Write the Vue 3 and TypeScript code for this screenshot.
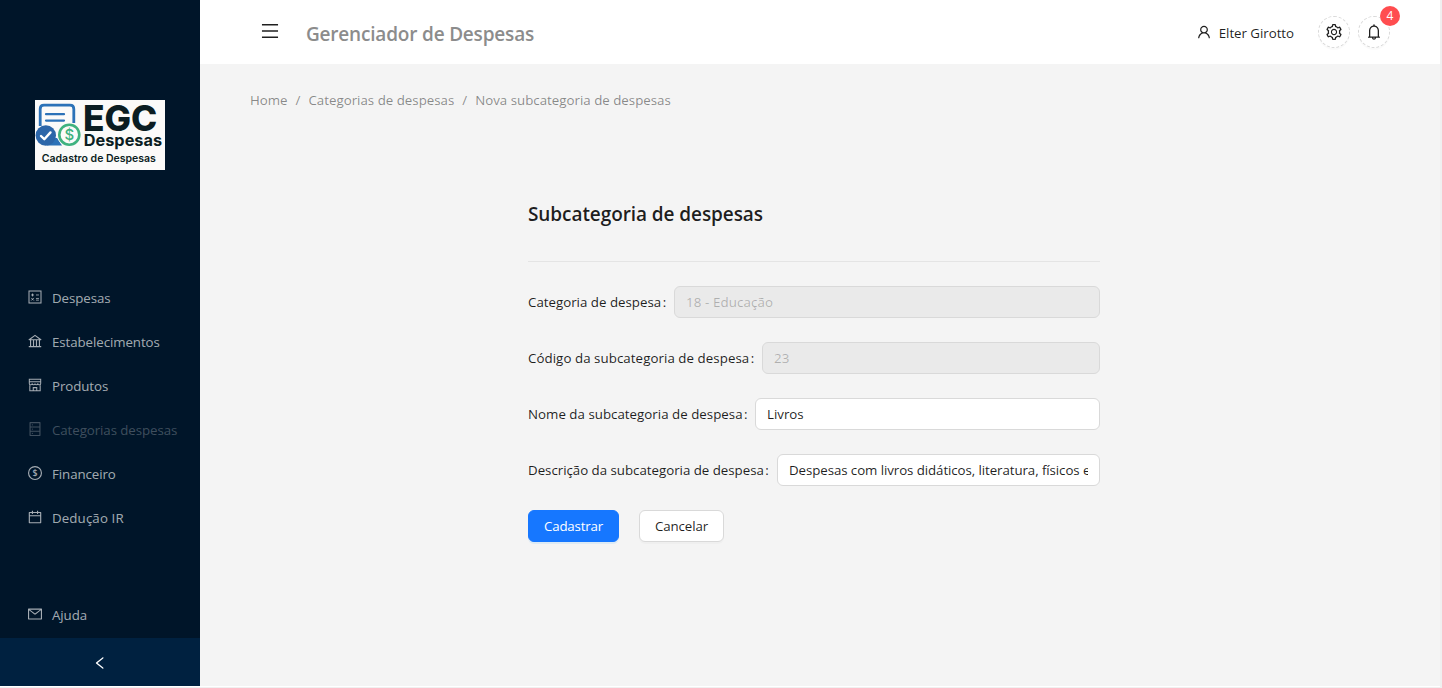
<script setup lang="ts">
import { ref } from 'vue'

interface MenuItem {
  label: string
  icon: string
  disabled?: boolean
}

const icons: Record<string, string> = {
  bank: 'M894 462c30.9 0 43.8-39.7 18.7-58L530.8 126.2a31.81 31.81 0 00-37.6 0L111.3 404c-25.1 18.2-12.2 58 18.8 58H192v374h-72c-4.4 0-8 3.6-8 8v52c0 4.4 3.6 8 8 8h784c4.4 0 8-3.6 8-8v-52c0-4.4-3.6-8-8-8h-72V462h62zM512 196.7l271.1 197.2H240.9L512 196.7zM264 462h117v374H264V462zm189 0h117v374H453V462zm307 374H642V462h118v374z',
  database: 'M832 64H192c-17.7 0-32 14.3-32 32v832c0 17.7 14.3 32 32 32h640c17.7 0 32-14.3 32-32V96c0-17.7-14.3-32-32-32zm-600 72h560v208H232V136zm560 480H232V408h560v208zm0 272H232V680h560v208zM304 240a40 40 0 1080 0 40 40 0 10-80 0zm0 272a40 40 0 1080 0 40 40 0 10-80 0zm0 272a40 40 0 1080 0 40 40 0 10-80 0z',
  calendar: 'M880 184H712v-64c0-4.4-3.6-8-8-8h-56c-4.4 0-8 3.6-8 8v64H384v-64c0-4.4-3.6-8-8-8h-56c-4.4 0-8 3.6-8 8v64H144c-17.7 0-32 14.3-32 32v664c0 17.7 14.3 32 32 32h736c17.7 0 32-14.3 32-32V216c0-17.7-14.3-32-32-32zm-40 656H184V460h656v380zM184 392V256h128v48c0 4.4 3.6 8 8 8h56c4.4 0 8-3.6 8-8v-48h256v48c0 4.4 3.6 8 8 8h56c4.4 0 8-3.6 8-8v-48h128v136H184z',
  mail: 'M928 160H96c-17.7 0-32 14.3-32 32v640c0 17.7 14.3 32 32 32h832c17.7 0 32-14.3 32-32V192c0-17.7-14.3-32-32-32zm-40 110.8V792H136V270.8l-27.6-21.5 39.3-50.5 42.8 33.3h643.1l42.8-33.3 39.3 50.5-27.7 21.5zM833.6 232L512 482 190.4 232l-42.8-33.3-39.3 50.5 27.6 21.5 341.6 265.6a55.99 55.99 0 0068.7 0L888 270.8l27.6-21.5-39.3-50.5-42.7 33.2z',
}

const menu: MenuItem[] = [
  { label: 'Despesas', icon: 'calc' },
  { label: 'Estabelecimentos', icon: 'bank' },
  { label: 'Produtos', icon: 'shop' },
  { label: 'Categorias despesas', icon: 'database', disabled: true },
  { label: 'Financeiro', icon: 'dollar' },
  { label: 'Dedução IR', icon: 'calendar' },
]

const crumbs = ['Home', 'Categorias de despesas', 'Nova subcategoria de despesas']

const categoria = ref('18 - Educação')
const codigo = ref('23')
const nome = ref('Livros')
const descricao = ref('Despesas com livros didáticos, literatura, físicos e digitais')
</script>

<template>
  <div class="layout">
    <aside class="sider">
      <svg class="logo" viewBox="0 0 130 70" width="130" height="70">
        <rect width="130" height="70" fill="#fbfaf9" />
        <path d="M5.2 26V9Q5.2 5.2 9 5.2H35Q38.8 5.2 38.8 9V23" fill="none" stroke="#2c72b8" stroke-width="2.8" />
        <path d="M11 14.2H29M11 20.6H29" stroke="#2c72b8" stroke-width="2.2" stroke-linecap="round" />
        <path d="M12 45.6H27L22 38H12z" fill="#2c72b8" />
        <circle cx="10.8" cy="35.5" r="10.2" fill="#2c66a9" />
        <path d="M6 36L9.3 39.2L15.5 32.4" fill="none" stroke="#fff" stroke-width="2.4" stroke-linecap="round" stroke-linejoin="round" />
        <circle cx="34.3" cy="34.7" r="12" fill="#fbfaf9" />
        <circle cx="34.3" cy="34.7" r="10" fill="#fbfaf9" stroke="#3fb27f" stroke-width="2.6" />
        <text class="logo-coin" x="34.3" y="40" text-anchor="middle">$</text>
        <text class="logo-egc" x="48" y="30.8">EGC</text>
        <text class="logo-name" x="48.8" y="46.2">Despesas</text>
        <text class="logo-sub" x="6.8" y="62.2">Cadastro de Despesas</text>
      </svg>

      <nav class="menu">
        <a v-for="item in menu" :key="item.label" class="item" :class="{ disabled: item.disabled }">
          <svg class="icon" viewBox="64 64 896 896" width="14" height="14">
            <g v-if="item.icon === 'calc'" fill="none" stroke="currentColor">
              <rect x="128" y="128" width="768" height="768" stroke-width="66" />
              <path d="M260 382H450M355 287V477M574 382H764M574 604H764M574 712H764M272 572L438 738M438 572L272 738" stroke-width="54" />
            </g>
            <g v-else-if="item.icon === 'shop'" fill="none" stroke="currentColor" stroke-width="66">
              <path d="M148 148H876V410Q876 500 800 500Q700 500 696 410Q690 500 604 500Q516 500 512 410Q508 500 420 500Q334 500 328 410Q324 500 224 500Q148 500 148 410ZM148 300H876M180 500V876H844V500M400 876V680H624V876" />
            </g>
            <g v-else-if="item.icon === 'dollar'">
              <circle cx="512" cy="512" r="412" fill="none" stroke="currentColor" stroke-width="72" />
              <text x="512" y="712" text-anchor="middle" class="coin">$</text>
            </g>
            <path v-else :d="icons[item.icon]" fill="currentColor" />
          </svg>
          <span>{{ item.label }}</span>
        </a>
      </nav>

      <a class="item help">
        <svg class="icon" viewBox="64 64 896 896" width="14" height="14"><path :d="icons.mail" fill="currentColor" /></svg>
        <span>Ajuda</span>
      </a>
      <button class="trigger" type="button" aria-label="Recolher menu">
        <svg viewBox="64 64 896 896" width="14" height="14" fill="currentColor">
          <path d="M724 218.3V141c0-6.7-7.7-10.4-12.9-6.3L260.3 486.8a31.86 31.86 0 000 50.3l450.8 352.1c5.3 4.1 12.9.4 12.9-6.3v-77.3c0-4.9-2.3-9.6-6.1-12.6l-360-281 360-281.1c3.8-3 6.1-7.7 6.1-12.6z" />
        </svg>
      </button>
    </aside>

    <div class="main">
      <header class="header">
        <svg class="burger" viewBox="64 64 896 896" width="18" height="18" fill="currentColor">
          <path d="M904 160H120c-4.4 0-8 3.6-8 8v64c0 4.4 3.6 8 8 8h784c4.4 0 8-3.6 8-8v-64c0-4.4-3.6-8-8-8zm0 624H120c-4.4 0-8 3.6-8 8v64c0 4.4 3.6 8 8 8h784c4.4 0 8-3.6 8-8v-64c0-4.4-3.6-8-8-8zm0-312H120c-4.4 0-8 3.6-8 8v64c0 4.4 3.6 8 8 8h784c4.4 0 8-3.6 8-8v-64c0-4.4-3.6-8-8-8z" />
        </svg>
        <h1 class="brand">Gerenciador de Despesas</h1>
        <div class="user">
          <svg viewBox="64 64 896 896" width="14" height="14" fill="currentColor">
            <path d="M858.5 763.6a374 374 0 00-80.6-119.5 375.63 375.63 0 00-119.5-80.6c-.4-.2-.8-.3-1.2-.5C719.5 518 760 444.7 760 362c0-137-111-248-248-248S264 225 264 362c0 82.7 40.5 156 102.8 201.1-.4.2-.8.3-1.2.5-44.8 18.9-85 46-119.5 80.6a375.63 375.63 0 00-80.6 119.5A371.7 371.7 0 00136 901.8a8 8 0 008 8.2h60c4.4 0 7.9-3.5 8-7.8 2-77.2 33-149.5 87.8-204.3 56.7-56.7 132-87.9 212.2-87.9s155.5 31.2 212.2 87.9C779 752.7 810 825 812 902.2c.1 4.4 3.6 7.8 8 7.8h60a8 8 0 008-8.2c-1-47.8-10.9-94.3-29.5-138.2zM512 534c-45.9 0-89.1-17.9-121.6-50.4S340 407.9 340 362c0-45.9 17.9-89.1 50.4-121.6S466.1 190 512 190s89.1 17.9 121.6 50.4S684 316.1 684 362c0 45.9-17.9 89.1-50.4 121.6S557.9 534 512 534z" />
          </svg>
          <span>Elter Girotto</span>
        </div>
        <button class="round" type="button" aria-label="Configurações">
          <svg viewBox="64 64 896 896" width="16" height="16" fill="currentColor">
            <path d="M924.8 625.7l-65.5-56c3.1-19 4.7-38.4 4.7-57.8s-1.6-38.8-4.7-57.8l65.5-56a32.03 32.03 0 009.3-35.2l-.9-2.6a443.74 443.74 0 00-79.7-137.9l-1.8-2.1a32.12 32.12 0 00-35.1-9.5l-81.3 28.9c-30-24.6-63.5-44-99.7-57.6l-15.7-85a32.05 32.05 0 00-25.8-25.7l-2.7-.5c-52.1-9.4-106.9-9.4-159 0l-2.7.5a32.05 32.05 0 00-25.8 25.7l-15.8 85.4a351.86 351.86 0 00-99 57.4l-81.9-29.1a32 32 0 00-35.1 9.5l-1.8 2.1a446.02 446.02 0 00-79.7 137.9l-.9 2.6c-4.5 12.5-.8 26.5 9.3 35.2l66.3 56.6c-3.1 18.8-4.6 38-4.6 57.1 0 19.2 1.5 38.4 4.6 57.1L99 625.5a32.03 32.03 0 00-9.3 35.2l.9 2.6c18.1 50.4 44.9 96.9 79.7 137.9l1.8 2.1a32.12 32.12 0 0035.1 9.5l81.9-29.1c29.8 24.5 63.1 43.9 99 57.4l15.8 85.4a32.05 32.05 0 0025.8 25.7l2.7.5a449.4 449.4 0 00159 0l2.7-.5a32.05 32.05 0 0025.8-25.7l15.7-85a350 350 0 0099.7-57.6l81.3 28.9a32 32 0 0035.1-9.5l1.8-2.1c34.8-41.1 61.6-87.5 79.7-137.9l.9-2.6c4.5-12.3.8-26.3-9.3-35zM788.3 465.9c2.5 15.1 3.8 30.6 3.8 46.1s-1.3 31-3.8 46.1l-6.6 40.1 74.7 63.9a370.03 370.03 0 01-42.6 73.6L721 702.8l-31.4 25.8c-23.9 19.6-50.5 35-79.3 45.8l-38.1 14.3-17.9 97a377.5 377.5 0 01-85 0l-17.9-97.2-37.8-14.5c-28.5-10.8-55-26.2-78.7-45.7l-31.4-25.9-93.4 33.2c-17-22.9-31.2-47.6-42.6-73.6l75.5-64.5-6.5-40c-2.4-14.9-3.7-30.3-3.7-45.5 0-15.3 1.2-30.6 3.7-45.5l6.5-40-75.5-64.5c11.3-26.1 25.6-50.7 42.6-73.6l93.4 33.2 31.4-25.9c23.7-19.5 50.2-34.9 78.7-45.7l37.9-14.3 17.9-97.2c28.1-3.2 56.8-3.2 85 0l17.9 97 38.1 14.3c28.7 10.8 55.4 26.2 79.3 45.8l31.4 25.8 92.8-32.9c17 22.9 31.2 47.6 42.6 73.6L781.8 426l6.5 39.9zM512 336c-97.2 0-176 78.8-176 176s78.8 176 176 176 176-78.8 176-176-78.8-176-176-176zm79.2 255.2A111.6 111.6 0 01512 624c-29.9 0-58-11.7-79.2-32.8A111.6 111.6 0 01400 512c0-29.9 11.7-58 32.8-79.2C454 411.6 482.1 400 512 400c29.9 0 58 11.6 79.2 32.8A111.6 111.6 0 01624 512c0 29.9-11.7 58-32.8 79.2z" />
          </svg>
        </button>
        <button class="round" type="button" aria-label="Notificações">
          <svg viewBox="64 64 896 896" width="16" height="16" fill="currentColor">
            <path d="M816 768h-24V428c0-141.1-104.3-257.7-240-277.1V112c0-22.1-17.9-40-40-40s-40 17.9-40 40v38.9c-135.7 19.4-240 136-240 277.1v340h-24c-17.7 0-32 14.3-32 32v32c0 4.4 3.6 8 8 8h216c0 61.8 50.2 112 112 112s112-50.2 112-112h216c4.4 0 8-3.6 8-8v-32c0-17.7-14.3-32-32-32zM512 888c-26.5 0-48-21.5-48-48h96c0 26.5-21.5 48-48 48zM304 768V428c0-55.6 21.6-107.8 60.9-147.1S456.4 220 512 220c55.6 0 107.8 21.6 147.1 60.9S720 372.4 720 428v340H304z" />
          </svg>
          <span class="badge">4</span>
        </button>
      </header>

      <div class="crumbs">
        <template v-for="(crumb, i) in crumbs" :key="crumb">
          <span v-if="i > 0" class="sep">/</span>
          <span>{{ crumb }}</span>
        </template>
      </div>

      <form class="form" @submit.prevent>
        <h2 class="title">Subcategoria de despesas</h2>
        <div class="field">
          <label class="label categoria" for="categoria">Categoria de despesa<i>:</i></label>
          <input id="categoria" v-model="categoria" class="input" disabled />
        </div>
        <div class="field">
          <label class="label codigo" for="codigo">Código da subcategoria de despesa<i>:</i></label>
          <input id="codigo" v-model="codigo" class="input" disabled />
        </div>
        <div class="field">
          <label class="label nome" for="nome">Nome da subcategoria de despesa<i>:</i></label>
          <input id="nome" v-model="nome" class="input" />
        </div>
        <div class="field">
          <label class="label descricao" for="descricao">Descrição da subcategoria de despesa<i>:</i></label>
          <input id="descricao" v-model="descricao" class="input long" />
        </div>
        <div class="actions">
          <button class="btn primary" type="submit">Cadastrar</button>
          <button class="btn" type="button">Cancelar</button>
        </div>
      </form>
    </div>
  </div>
</template>

<style>
body {
  margin: 0;
  background: #f0f0f0;
  overflow: hidden;
}
</style>

<style scoped>
* {
  box-sizing: border-box;
}
.layout {
  display: flex;
  width: 1440px;
  height: 687px;
  border-bottom: 1px solid #fff;
  background: #f4f4f4;
  font-family: "Segoe UI", "Open Sans", "Noto Sans", sans-serif;
  font-size: 13.3px;
  line-height: 22px;
  color: rgba(0, 0, 0, 0.88);
}
.sider {
  display: flex;
  flex-direction: column;
  flex: 0 0 200px;
  background: #001529;
}
.logo {
  display: block;
  overflow: visible;
  margin: 100px 35px 108px;
  font-family: Inter, sans-serif;
  fill: #0b1d22;
}
.logo-coin {
  font-size: 15px;
  font-weight: 500;
  fill: #3fb27f;
}
.logo-egc {
  font-size: 35.3px;
  font-weight: 800;
}
.logo-name {
  font-size: 16.3px;
  font-weight: 700;
}
.logo-sub {
  font-size: 10.5px;
  font-weight: 600;
}
.menu {
  display: flex;
  flex-direction: column;
  gap: 4px;
}
.item {
  display: flex;
  align-items: center;
  height: 40px;
  padding-left: 28px;
  gap: 10px;
  color: rgba(255, 255, 255, 0.65);
  letter-spacing: -0.08px;
}
.item.disabled {
  color: rgba(255, 255, 255, 0.25);
}
.item:last-child {
  letter-spacing: 0.12px;
}
.icon {
  margin-bottom: 2px;
}
.coin {
  font-family: "Open Sans", sans-serif;
  font-size: 560px;
  font-weight: 600;
  fill: currentColor;
}
.help {
  margin-top: auto;
  margin-bottom: 3px;
}
.trigger {
  display: flex;
  align-items: center;
  justify-content: center;
  height: 48px;
  padding: 2px 0 0;
  border: 0;
  background: #002140;
  color: #fff;
}
.main {
  flex: 1;
  min-width: 0;
}
.header {
  display: flex;
  align-items: center;
  height: 64px;
  padding: 0 50px 0 61px;
  background: #fff;
}
.burger {
  margin-bottom: 2px;
}
.brand {
  flex: 1;
  margin: 4px 0 0 27px;
  font-size: 19px;
  font-weight: 600;
  letter-spacing: -0.19px;
  line-height: 28px;
  color: #8c8c8c;
}
.user {
  display: flex;
  align-items: center;
  gap: 8px;
  margin: 2px 24px 0 0;
  letter-spacing: -0.04px;
}
.user svg {
  margin-bottom: 2px;
}
.round {
  position: relative;
  display: flex;
  align-items: center;
  justify-content: center;
  width: 32px;
  height: 32px;
  padding: 0;
  border: 1px dashed #d9d9d9;
  border-radius: 50%;
  background: #fff;
  box-shadow: 0 2px 0 rgba(0, 0, 0, 0.02);
  color: rgba(0, 0, 0, 0.88);
}
.round + .round {
  margin-left: 8px;
}
.badge {
  position: absolute;
  top: -11px;
  right: -11px;
  width: 20px;
  height: 20px;
  border-radius: 10px;
  background: #ff4d4f;
  color: #fff;
  font-family: "Open Sans", sans-serif;
  font-size: 12px;
  line-height: 20px;
  text-align: center;
}
.crumbs {
  display: flex;
  padding: 25px 50px 0;
  color: rgba(0, 0, 0, 0.45);
}
.sep {
  margin: 0 8px;
}
.form {
  width: 572px;
  margin: 89px 0 0 328px;
}
.title {
  height: 62px;
  margin: 0 0 24px;
  border-bottom: 1px solid #e4e4e4;
  font-size: 19px;
  font-weight: 600;
  letter-spacing: -0.08px;
  line-height: 28px;
}
.field {
  display: flex;
  align-items: center;
  height: 32px;
  margin-bottom: 24px;
}
.label {
  flex: none;
  white-space: nowrap;
}
.label i {
  margin-left: 1.5px;
  font-style: normal;
}
.categoria {
  width: 146px;
}
.codigo {
  width: 234px;
  letter-spacing: 0.06px;
}
.nome {
  width: 227px;
  letter-spacing: 0.02px;
}
.descricao {
  width: 249px;
  letter-spacing: -0.02px;
}
.input {
  flex: 1;
  min-width: 0;
  height: 32px;
  padding: 4px 11px;
  border: 1px solid #d9d9d9;
  border-radius: 6px;
  background: #fff;
  color: rgba(0, 0, 0, 0.88);
  font: inherit;
  outline: none;
}
.input:disabled {
  background: rgba(0, 0, 0, 0.04);
  color: rgba(0, 0, 0, 0.25);
  letter-spacing: 0.12px;
}
.long {
  letter-spacing: -0.08px;
}
.actions {
  display: flex;
  gap: 20px;
}
.btn {
  width: 85px;
  height: 32px;
  padding: 0;
  border: 1px solid #d9d9d9;
  border-radius: 6px;
  background: #fff;
  box-shadow: 0 2px 0 rgba(0, 0, 0, 0.02);
  color: rgba(0, 0, 0, 0.88);
  font: inherit;
  letter-spacing: -0.1px;
}
.primary {
  width: 91px;
  border-color: #1677ff;
  background: #1677ff;
  box-shadow: 0 2px 0 rgba(5, 145, 255, 0.1);
  color: #fff;
  letter-spacing: -0.17px;
}
</style>
